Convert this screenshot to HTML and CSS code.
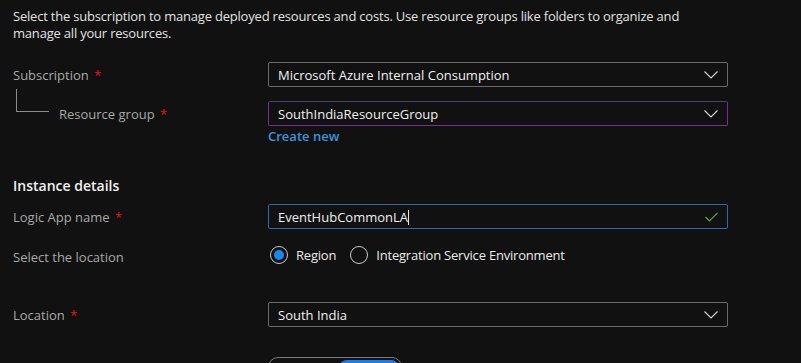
FILE: index.html
```html
<!DOCTYPE html>
<html lang="en">
<head>
  <meta charset="UTF-8" />
  <title>Create Logic App</title>
  <link rel="stylesheet" href="styles.css">
</head>
<body>
  <p class="intro">Select the subscription to manage deployed resources and costs. Use resource groups like folders to organize and manage all your resources.</p>

  <div class="field first">
    <label class="label">Subscription <span class="req">*</span></label>
    <div class="box select">
      <span>Microsoft Azure Internal Consumption</span>
      <svg class="chev" width="14" height="8" viewBox="0 0 14 8"><path d="M0.5 0.5 L7 7 L13.5 0.5" fill="none" stroke="#cfcfcf" stroke-width="1.2"/></svg>
    </div>
  </div>

  <div class="field rg">
    <label class="label"><span class="tree"></span>Resource group <span class="req">*</span></label>
    <div class="box select purple">
      <span>SouthIndiaResourceGroup</span>
      <svg class="chev" width="14" height="8" viewBox="0 0 14 8"><path d="M0.5 0.5 L7 7 L13.5 0.5" fill="none" stroke="#cfcfcf" stroke-width="1.2"/></svg>
    </div>
  </div>
  <div class="field link-row">
    <span></span>
    <a href="#" class="create">Create new</a>
  </div>

  <h2 class="section">Instance details</h2>

  <div class="field name-row">
    <label class="label">Logic App name <span class="req">*</span></label>
    <div class="box focused">
      <span>EventHubCommonLA<span class="caret"></span></span>
      <svg class="check" width="13" height="10" viewBox="0 0 13 10"><path d="M0.5 5 L4.5 9 L12.5 0.8" fill="none" stroke="#57a64a" stroke-width="1.2"/></svg>
    </div>
  </div>

  <div class="field radios-row">
    <label class="label">Select the location</label>
    <div class="radios">
      <span class="radio on"></span><span class="radio-text">Region</span>
      <span class="radio"></span><span class="radio-text">Integration Service Environment</span>
    </div>
  </div>

  <div class="field loc">
    <label class="label">Location <span class="req">*</span></label>
    <div class="box select">
      <span>South India</span>
      <svg class="chev" width="14" height="8" viewBox="0 0 14 8"><path d="M0.5 0.5 L7 7 L13.5 0.5" fill="none" stroke="#cfcfcf" stroke-width="1.2"/></svg>
    </div>
  </div>

  <div class="field toggle-row">
    <span></span>
    <div class="toggle"><span class="seg active"></span></div>
  </div>
</body>
</html>
```

FILE: styles.css
```css
body {
  margin: 0;
  padding: 0 13px;
  background-color: #111111;
  color: #e6e6e6;
  font-family: "Open Sans", "Noto Sans", sans-serif;
  font-size: 13px;
  overflow: hidden;
  height: 363px;
}
.intro {
  margin: 8px 0 0;
  line-height: 17px;
  width: 700px;
  color: #e2e2e2;
  letter-spacing: -0.2px;
}
.field {
  display: grid;
  grid-template-columns: 255px 460px;
  align-items: center;
}
.field.first {
  margin-top: 20px;
}
.field.rg {
  margin-top: 14px;
}
.label {
  display: flex;
  align-items: center;
  color: #a8a8a8;
  white-space: pre;
}
.req {
  color: #e81123;
  margin-left: 2px;
}
.tree {
  width: 32px;
  height: 22px;
  margin: 0 10px 0 3px;
  border-left: 1px solid #8a8a8a;
  border-bottom: 1px solid #8a8a8a;
  transform: translateY(-13px);
}
.box {
  height: 25px;
  box-sizing: border-box;
  border: 1px solid #6a6a6a;
  border-radius: 2px;
  display: flex;
  align-items: center;
  justify-content: space-between;
  padding: 0 8px 0 9px;
  color: #f0f0f0;
}
.box.purple {
  border-color: #7b2d96;
  border-top-color: #4a3f70;
}
.box.focused {
  border-color: #2e6aa6;
}
.chev {
  margin-right: 1px;
}
.caret {
  display: inline-block;
  width: 1px;
  height: 15px;
  background: #e6e6e6;
  vertical-align: -3px;
}
.check {
  margin-right: 1px;
}
.link-row {
  margin-top: 2px;
  height: 16px;
}
.create {
  color: #3a96dd;
  text-decoration: none;
  font-weight: 600;
  line-height: 16px;
}
.section {
  margin: 32px 0 0;
  font-size: 14px;
  font-weight: 600;
  color: #f2f2f2;
  line-height: 20px;
}
.name-row {
  margin-top: 8px;
}
.radios-row {
  margin-top: 16px;
  height: 24px;
}
.radios {
  display: flex;
  align-items: center;
  transform: translateY(-2px);
}
.radio {
  width: 18px;
  height: 18px;
  box-sizing: border-box;
  border: 1px solid #c8c8c8;
  border-radius: 50%;
  margin: 0 8px 0 2px;
  display: flex;
  align-items: center;
  justify-content: center;
}
.radio.on::after {
  content: "";
  width: 10px;
  height: 10px;
  border-radius: 50%;
  background: #1a86f0;
}
.radio-text {
  margin-right: 12px;
  color: #eaeaea;
  letter-spacing: -0.2px;
}
.loc {
  margin-top: 33px;
}
.toggle-row {
  margin-top: 30px;
}
.toggle {
  width: 134px;
  height: 28px;
  box-sizing: border-box;
  border: 1px solid #7a7a7a;
  border-radius: 10px;
  display: flex;
  padding: 2px;
  justify-content: flex-end;
}
.seg.active {
  width: 60px;
  background: #1f7be6;
  border-radius: 8px;
}
```
